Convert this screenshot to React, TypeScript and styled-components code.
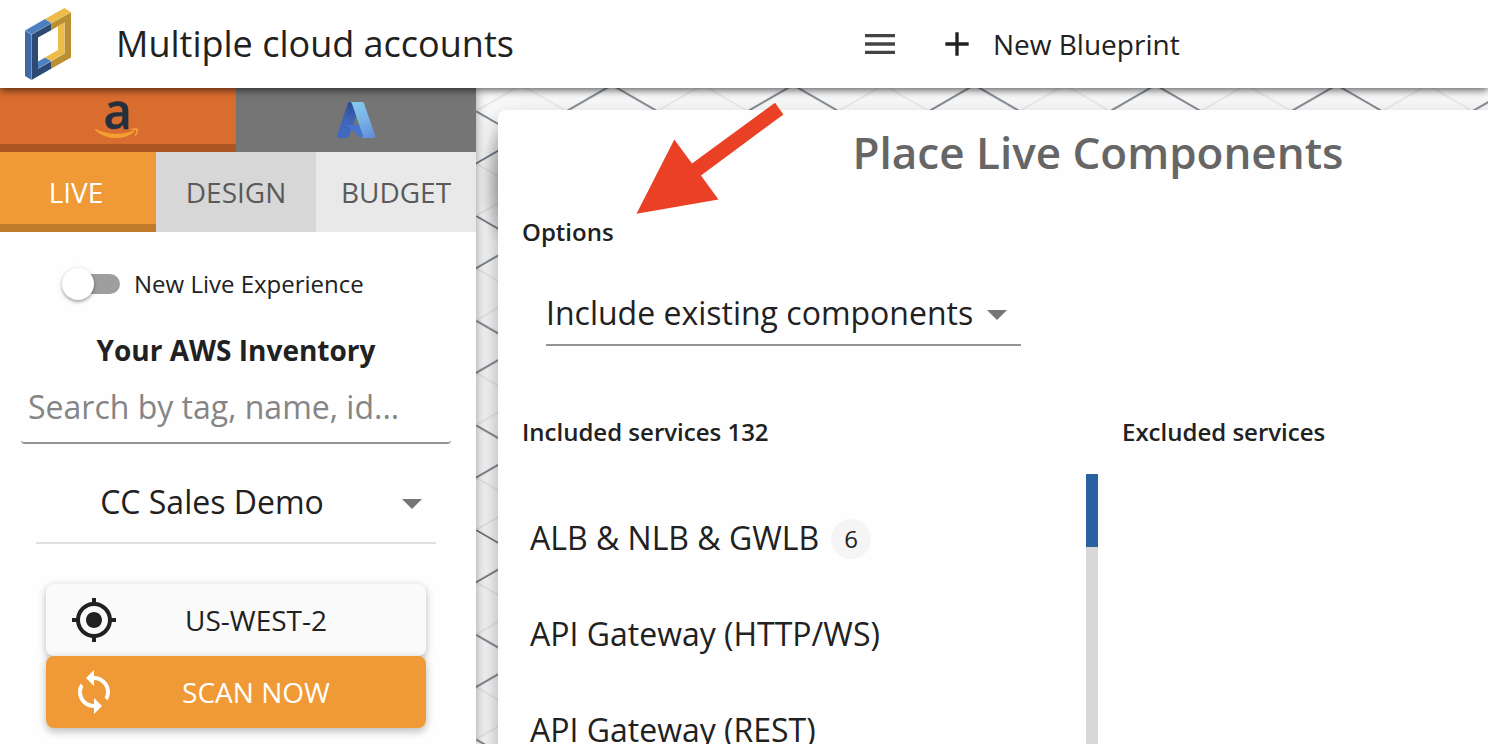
import React from "react";
import styled, { createGlobalStyle } from "styled-components";
import { MdAdd, MdGpsFixed, MdMenu, MdSync } from "react-icons/md";

const GlobalStyle = createGlobalStyle`
  *, *::before, *::after { box-sizing: border-box; }
  body {
    margin: 0;
    overflow: hidden;
    font-family: "Open Sans", sans-serif;
    color: #212121;
    background: #fff;
  }
  button, input { font-family: inherit; color: inherit; }
`;

const Page = styled.div`
  display: flex;
  flex-direction: column;
  width: 1488px;
  height: 744px;
  overflow: hidden;
`;

const Header = styled.header`
  display: flex;
  align-items: center;
  flex: none;
  height: 88px;
  padding-left: 24px;
  background: #fff;
  box-shadow: 0 2px 8px rgba(0, 0, 0, 0.65);
  z-index: 3;
`;

const PageTitle = styled.h1`
  width: 744px;
  margin: 0 0 0 44px;
  font-size: 36px;
  font-weight: 400;
  line-height: 86px;
  white-space: nowrap;
`;

const MenuButton = styled.button`
  display: flex;
  padding: 0;
  border: 0;
  background: none;
  color: #444;
`;

const NewBlueprint = styled.button`
  display: flex;
  align-items: center;
  gap: 16px;
  margin-left: 37px;
  padding: 0;
  border: 0;
  background: none;
  font-size: 28px;
  line-height: 88px;
`;

const Body = styled.div`
  display: flex;
  flex: 1;
  min-height: 0;
`;

const Sidebar = styled.aside`
  display: flex;
  flex-direction: column;
  flex: none;
  width: 476px;
  background: #fefefe;
  box-shadow: 0 0 10px rgba(0, 0, 0, 0.4);
  z-index: 2;
`;

const Providers = styled.div`
  display: flex;
  height: 64px;
`;

const Provider = styled.div<{ $active?: boolean }>`
  display: flex;
  justify-content: center;
  width: ${(p) => (p.$active ? 236 : 240)}px;
  background: ${(p) => (p.$active ? "#d96c2f" : "#757575")};
  border-bottom: ${(p) => (p.$active ? "8px solid #ab5522" : "0")};
`;

const Tabs = styled.nav`
  display: flex;
  height: 80px;
`;

const Tab = styled.div<{ $bg: string; $width: number; $active?: boolean }>`
  width: ${(p) => p.$width}px;
  background: ${(p) => p.$bg};
  color: ${(p) => (p.$active ? "#fff" : "#5a5a5a")};
  border-bottom: ${(p) => (p.$active ? "8px solid #bf7a2a" : "0")};
  padding-right: ${(p) => (p.$active ? 4 : 0)}px;
  font-size: 28px;
  line-height: 81px;
  text-align: center;
`;

const SwitchRow = styled.label`
  display: flex;
  align-items: center;
  gap: 14px;
  margin: 35px 0 0 62px;
  height: 34px;
  font-size: 24px;
  white-space: nowrap;
`;

const SwitchLabel = styled.span`
  padding-bottom: 2px;
`;

const Track = styled.span`
  display: flex;
  align-items: center;
  width: 58px;
  height: 20px;
  border-radius: 10px;
  background: linear-gradient(90deg, transparent 10px, #9e9e9e 10px);
`;

const Thumb = styled.span`
  width: 32px;
  height: 32px;
  border-radius: 50%;
  background: #fff;
  box-shadow: 0 2px 3px rgba(0, 0, 0, 0.28), 0 1px 6px rgba(0, 0, 0, 0.12);
`;

const InventoryTitle = styled.h2`
  margin: 29px 0 0;
  padding-right: 4px;
  font-size: 28px;
  font-weight: 700;
  line-height: 40px;
  text-align: center;
`;

const SearchField = styled.input`
  width: 430px;
  height: 73px;
  margin: 1px 0 0 21px;
  padding: 0 7px;
  border: 0;
  border-bottom: 2px solid #949494;
  border-radius: 4px;
  background: none;
  font-size: 32px;
  outline: none;
  &::placeholder { color: #858585; opacity: 1; }
`;

const Caret = styled.span<{ $drop: number }>`
  margin-top: ${(p) => p.$drop}px;
  border: 10px solid transparent;
  border-top-color: #757575;
  border-bottom: 0;
`;

const AccountSelect = styled.div`
  display: flex;
  align-items: center;
  width: 400px;
  height: 84px;
  margin: 16px 0 0 36px;
  padding-right: 14px;
  border-bottom: 2px solid #e0e0e0;
  font-size: 32px;
`;

const AccountName = styled.span`
  flex: 1;
  padding: 1px 14px 0 0;
  text-align: center;
`;

const Actions = styled.div`
  display: flex;
  flex-direction: column;
  width: 380px;
  margin: 40px 0 0 46px;
`;

const ActionButton = styled.button<{ $primary?: boolean }>`
  display: flex;
  align-items: center;
  height: 72px;
  padding: 0 32px 0 24px;
  border: 0;
  border-radius: 8px;
  background: ${(p) => (p.$primary ? "#f09a37" : "#fafafa")};
  color: ${(p) => (p.$primary ? "#fff" : "#212121")};
  font-size: 28px;
  box-shadow: 0 4px 8px rgba(0, 0, 0, 0.22), 0 0 8px rgba(0, 0, 0, 0.07);
`;

const ActionLabel = styled.span`
  flex: 1;
  text-align: center;
`;

const Canvas = styled.main`
  position: relative;
  flex: 1;
  min-width: 0;
  padding: 22px 0 0 22px;
  overflow: hidden;
  background: #f9f9f9;
`;

const Grid = styled.svg`
  position: absolute;
  inset: 0;
`;

const Panel = styled.section`
  position: relative;
  display: flex;
  flex-direction: column;
  width: 1200px;
  height: 900px;
  padding: 0 24px;
  border-radius: 8px;
  background: #fefefe;
  box-shadow: 0 12px 24px rgba(0, 0, 0, 0.34);
`;

const PanelTitle = styled.h2`
  margin: 0;
  font-size: 44px;
  font-weight: 600;
  line-height: 84px;
  text-align: center;
  color: #666;
`;

const SectionLabel = styled.h3`
  margin: 0;
  font-size: 24px;
  font-weight: 600;
  line-height: 36px;
`;

const Options = styled.div`
  margin-top: 20px;
`;

const OptionSelect = styled.div`
  display: flex;
  align-items: center;
  justify-content: space-between;
  width: 475px;
  height: 64px;
  margin: 32px 0 0 24px;
  padding: 0 14px 1px 0;
  border-bottom: 2px solid #949494;
  font-size: 32px;
  white-space: nowrap;
`;

const Columns = styled.div`
  display: grid;
  grid-template-columns: 576px 1fr;
  column-gap: 24px;
  margin-top: 68px;
`;

const ListScroller = styled.div`
  display: flex;
  justify-content: space-between;
  height: 480px;
  margin-top: 24px;
`;

const ServiceList = styled.ul`
  margin: 0;
  padding: 16px 0 0 8px;
  list-style: none;
`;

const Service = styled.li`
  display: flex;
  align-items: center;
  gap: 12px;
  height: 96px;
  padding-bottom: 1px;
  font-size: 32px;
  white-space: nowrap;
`;

const Count = styled.span`
  width: 40px;
  height: 40px;
  margin-top: 3px;
  border-radius: 50%;
  background: #f5f5f5;
  font-size: 24px;
  line-height: 40px;
  text-align: center;
`;

const ScrollTrack = styled.div`
  width: 12px;
  background: #d8d8d8;
`;

const ScrollThumb = styled.div`
  height: 73px;
  background: #2a61a1;
`;

const Pointer = styled.svg`
  position: absolute;
  left: 160px;
  top: 14px;
`;

const Logo = () => (
  <svg width="48" height="72" viewBox="24 8 48 72">
    <path fill="#3f6aa5" d="M25 30.5l6.5 4V80l-6.500-4z" />
    <path fill="#4d80c0" d="M25 30.500L45 19l6.500 4-20 11.500z" />
    <path fill="#2c4a73" d="M31.500 34.500l20-11.500v7L38 37.500v31L51.500 61v7.500L31.500 80z" />
    <path fill="#4d80c0" d="M38 61.500l7-4 6.500 3.500-13.500 7.500z" />
    <path fill="#ecbb48" d="M45 19L64.500 8l6.500 4.300L51.500 23z" />
    <path fill="#ecbb48" d="M58 26.500l6.500-4v31L51.500 61 45 57.500 58 50z" />
    <path fill="#b98f2f" d="M51.500 23L71 12.300V57.500l-19.500 11V61l13-7.500v-31L51.500 30z" />
    <path
      fill="none"
      stroke="#fff"
      strokeOpacity=".4"
      strokeWidth=".5"
      d="M25 30.500l6.500 4V80M31.500 34.500L71 12.300M38 68.500l26.500-15v-31"
    />
  </svg>
);

const AmazonMark = styled.svg`
  overflow: visible;
`;

const AmazonLogo = () => (
  <AmazonMark width="60" height="56" viewBox="88 88 60 56">
    <text
      x="103.500"
      y="129.300"
      fontFamily="Open Sans"
      fontWeight="600"
      fontSize="49"
      fill="#252f3e"
      stroke="#252f3e"
      strokeWidth="0.400"
    >
      a
    </text>
    <path
      fill="#f3a033"
      d="M94.300 129.200c-.3-.5.2-.7.700-.4 6.500 3.300 13.500 5 21.500 5 5.500 0 11.500-1 17-3.100.9-.3 1.600.5.700 1.200-5 4.100-12 6.200-18.200 6.200-8.500 0-16.200-3.200-21.700-8.900z"
    />
    <path
      fill="#f3a033"
      d="M136 130.500c-.6-.8-4-.4-5.600-.2-.5.100-.5-.4-.1-.7 2.700-1.900 7.200-1.400 7.700-.7.500.7-.1 5.200-2.700 7.400-.4.300-.8.100-.6-.3.600-1.500 1.900-4.700 1.300-5.500z"
    />
  </AmazonMark>
);

const AzureLogo = () => (
  <svg width="40" height="64" viewBox="336 88 40 64">
    <defs>
      <linearGradient id="azDark" x1="0.600" y1="0" x2="0.300" y2="1">
        <stop offset="0" stopColor="#2b4a8f" />
        <stop offset="0.500" stopColor="#3e66b8" />
        <stop offset="1" stopColor="#4269be" />
      </linearGradient>
      <linearGradient id="azLight" x1="0.300" y1="0" x2="0.700" y2="1">
        <stop offset="0" stopColor="#86c8ec" />
        <stop offset="0.500" stopColor="#79b4e6" />
        <stop offset="1" stopColor="#6490dc" />
      </linearGradient>
    </defs>
    <path
      fill="url(#azDark)"
      d="M349.600 102h12l-12.700 34.500c-.3.900-1 1.500-2 1.500h-8.500c-1.300 0-2-1.200-1.500-2.500l11-32c.3-.9.900-1.500 1.700-1.500z"
    />
    <path fill="#4673cc" d="M348 125h16l-1.500 13c-.8 0-1.500-.3-2.100-.8l-12.800-11.100c-.5-.5-.3-1.100.4-1.100z" />
    <path
      fill="url(#azLight)"
      d="M349.600 102h12.600c.9 0 1.600.6 1.900 1.500l11 32c.5 1.300-.3 2.500-1.600 2.500h-12c1.300 0 1.800-1.200 1.400-2.500l-11-32c-.4-.9-1.200-1.500-2.300-1.500z"
    />
  </svg>
);

/* Isometric lattice: one tile spans two diagonals in each direction. */
const IsoGrid = () => (
  <Grid width="1012" height="656">
    <defs>
      <pattern id="iso" x="0" y="23.200" width="181.200" height="104.700" patternUnits="userSpaceOnUse">
        <g fill="none" stroke="#e6e6e6" strokeWidth="1.500">
          <path d="M-3 106.400L184.200 -1.700M-3 50.600L93.600 106.400M87.600 -1.700L184.200 54.100" />
        </g>
        <g fill="none" stroke="#6b7480" strokeWidth="1.700">
          <path d="M-3 -1.700L184.200 106.400M-3 54.100L93.600 -1.700M87.600 106.400L184.200 50.600" />
        </g>
      </pattern>
      <radialGradient id="spot">
        <stop offset="0" stopColor="#000" stopOpacity=".28" />
        <stop offset="1" stopColor="#000" stopOpacity="0" />
      </radialGradient>
    </defs>
    <rect width="1012" height="656" fill="url(#iso)" />
    <ellipse cx="28" cy="98" rx="24" ry="64" fill="url(#spot)" />
  </Grid>
);

const services: { name: string; count?: number }[] = [
  { name: "ALB & NLB & GWLB", count: 6 },
  { name: "API Gateway (HTTP/WS)" },
  { name: "API Gateway (REST)" },
];

export default function App() {
  return (
    <Page>
      <GlobalStyle />
      <Header>
        <Logo />
        <PageTitle>Multiple cloud accounts</PageTitle>
        <MenuButton aria-label="Menu">
          <MdMenu size={40} />
        </MenuButton>
        <NewBlueprint>
          <MdAdd size={40} />
          New Blueprint
        </NewBlueprint>
      </Header>
      <Body>
        <Sidebar>
          <Providers>
            <Provider $active>
              <AmazonLogo />
            </Provider>
            <Provider>
              <AzureLogo />
            </Provider>
          </Providers>
          <Tabs>
            <Tab $active $bg="#f09a37" $width={156}>LIVE</Tab>
            <Tab $bg="#d7d7d7" $width={160}>DESIGN</Tab>
            <Tab $bg="#e9e9e9" $width={160}>BUDGET</Tab>
          </Tabs>
          <SwitchRow>
            <Track>
              <Thumb />
            </Track>
            <SwitchLabel>New Live Experience</SwitchLabel>
          </SwitchRow>
          <InventoryTitle>Your AWS Inventory</InventoryTitle>
          <SearchField placeholder="Search by tag, name, id..." />
          <AccountSelect>
            <AccountName>CC Sales Demo</AccountName>
            <Caret $drop={6} />
          </AccountSelect>
          <Actions>
            <ActionButton>
              <MdGpsFixed size={48} />
              <ActionLabel>US-WEST-2</ActionLabel>
            </ActionButton>
            <ActionButton $primary>
              <MdSync size={48} />
              <ActionLabel>SCAN NOW</ActionLabel>
            </ActionButton>
          </Actions>
        </Sidebar>
        <Canvas>
          <IsoGrid />
          <Panel>
            <PanelTitle>Place Live Components</PanelTitle>
            <Options>
              <SectionLabel>Options</SectionLabel>
              <OptionSelect>
                Include existing components
                <Caret $drop={5} />
              </OptionSelect>
            </Options>
            <Columns>
              <div>
                <SectionLabel>Included services 132</SectionLabel>
                <ListScroller>
                  <ServiceList>
                    {services.map((s) => (
                      <Service key={s.name}>
                        {s.name}
                        {s.count !== undefined && <Count>{s.count}</Count>}
                      </Service>
                    ))}
                  </ServiceList>
                  <ScrollTrack>
                    <ScrollThumb />
                  </ScrollTrack>
                </ListScroller>
              </div>
              <SectionLabel>Excluded services</SectionLabel>
            </Columns>
          </Panel>
          <Pointer width="150" height="114" viewBox="636 102 150 114">
            <path
              fill="#ea4126"
              d="M775 102.700l8.400 11.800-82.400 61 17.500 24-82 14.300 37.800-74.300 17.700 24z"
            />
          </Pointer>
        </Canvas>
      </Body>
    </Page>
  );
}
